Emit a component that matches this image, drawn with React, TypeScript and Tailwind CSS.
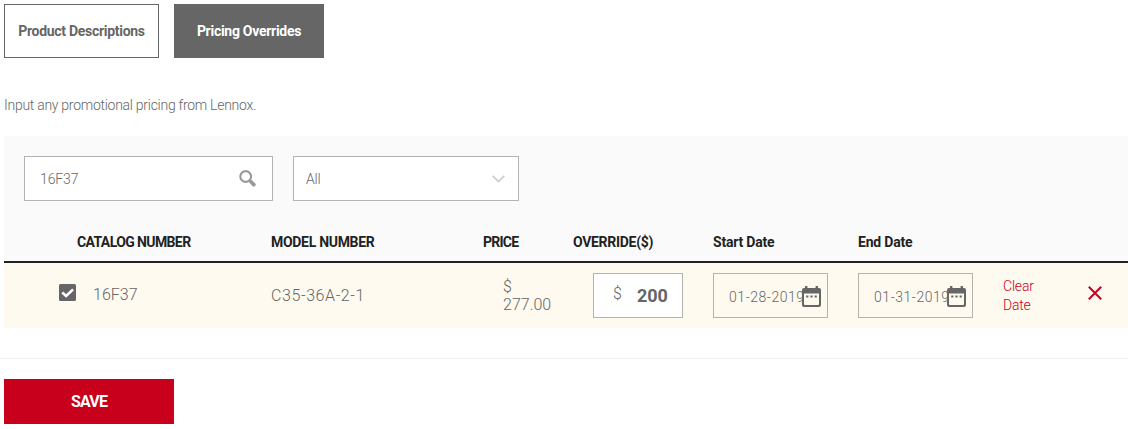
import React, { useState } from 'react';

const columns = 'grid grid-cols-[267px_212px_90px_140px_145px_145px_85px_1fr]';

const SearchIcon = () => (
  <svg className="h-[17px] w-[17px]" viewBox="0 0 17 17" fill="none" stroke="#999999">
    <circle cx="6.7" cy="6.5" r="5.4" strokeWidth="2.1" />
    <path d="M10.6 10.4l1.5 1.5" strokeWidth="2.4" />
    <path d="M12.2 12l2.6 2.6" strokeWidth="3.8" strokeLinecap="round" />
  </svg>
);

const CalendarIcon = () => (
  <svg className="h-[21px] w-[19px]" viewBox="0 0 19 21">
    <path
      fill="#666666"
      fillRule="evenodd"
      d="M3 0h2.4v2h8.2V0H16v2h1a2 2 0 0 1 2 2v15a2 2 0 0 1-2 2H2a2 2 0 0 1-2-2V4a2 2 0 0 1 2-2h1zM2 7.6V18a1 1 0 0 0 1 1h13a1 1 0 0 0 1-1V7.6z"
    />
    <path fill="#666666" d="M4.2 9.6h2.2v2H4.2zM8.4 9.6h2.2v2H8.4zM12.6 9.6h2.2v2h-2.2z" />
  </svg>
);

const DateField: React.FC<{ value: string }> = ({ value }) => (
  <div className="mt-[10px] flex h-[45px] w-[115px] items-center border border-[#b5b3ac] pl-[15px] pt-px">
    <span className="w-[73px] whitespace-nowrap pt-px text-sm font-light tracking-[0.55px]">{value}</span>
    <span className="mt-px flex-shrink-0">
      <CalendarIcon />
    </span>
  </div>
);

const App: React.FC = () => {
  const [query, setQuery] = useState('16F37');

  return (
    <div className="h-[429px] w-[1128px] overflow-hidden bg-white pt-1 font-['Roboto','Open_Sans',sans-serif] text-[#666666]">
      {/* Tabs */}
      <div className="flex gap-[15px] pl-1 text-sm font-bold">
        <button className="h-[54px] w-[155px] whitespace-nowrap border border-[#666666] tracking-[-0.29px]">
          Product Descriptions
        </button>
        <button className="h-[54px] w-[150px] whitespace-nowrap bg-[#666666] tracking-[-0.28px] text-white">
          Pricing Overrides
        </button>
      </div>

      <p className="mt-[37px] h-[41px] pl-1 text-sm font-light leading-5 tracking-[-0.27px]">
        Input any promotional pricing from Lennox.
      </p>

      <div className="ml-1 bg-[#fafafa]">
        {/* Filters */}
        <div className="flex gap-5 pl-5 pt-5">
          <label className="flex h-[45px] w-[249px] items-center border border-[#b3b3b3] bg-white pl-[15px] pr-4">
            <input
              value={query}
              onChange={(e) => setQuery(e.target.value)}
              className="min-w-0 flex-1 pt-px text-sm font-light tracking-[-0.1px] outline-none"
            />
            <SearchIcon />
          </label>
          <button className="flex h-[45px] w-[226px] items-center justify-between border border-[#b3b3b3] bg-white pl-3 pr-[13px] text-sm font-light tracking-[-0.2px]">
            All
            <svg className="h-2 w-[13px]" viewBox="0 0 13 8" fill="none" stroke="#cccccc" strokeWidth="1.7">
              <path d="M.7.8l5.8 5.8L12.3.8" />
            </svg>
          </button>
        </div>

        {/* Table header */}
        <div className={`${columns} h-[62px] items-center border-b-2 border-[#222222] pt-[21px] text-sm font-bold leading-5 text-[#222222]`}>
          <span className="pl-[73px] tracking-[-0.61px]">CATALOG NUMBER</span>
          <span className="tracking-[-0.3px]">MODEL NUMBER</span>
          <span className="tracking-[-0.75px]">PRICE</span>
          <span className="tracking-[-0.3px]">OVERRIDE($)</span>
          <span className="tracking-[-0.2px]">Start Date</span>
          <span className="tracking-[-0.2px]">End Date</span>
        </div>

        {/* Row */}
        <div className={`${columns} h-[65px] bg-[#fffaef]`}>
          <div className="flex items-start pl-[55px]">
            <svg className="mt-[21px] h-[17px] w-[17px]" viewBox="0 0 17 17">
              <rect width="17" height="17" rx="1.5" fill="#666666" />
              <path d="M3.3 8.5l3.8 3.5 7-6.6" fill="none" stroke="#ffffff" strokeWidth="2.6" />
            </svg>
            <span className="ml-[17px] mt-5 text-base font-light leading-6">16F37</span>
          </div>
          <span className="mt-[21px] text-base font-light leading-6 tracking-[0.6px]">C35-36A-2-1</span>
          <span className="mt-[15px] w-[50px] pl-5 text-base font-light leading-[18px]">
            $<br />277.00
          </span>
          <div className="ml-5 mt-[10px] flex h-[45px] w-[90px] items-center border border-[#b5b3ac] bg-white pl-[19px]">
            <span className="-mt-1 w-6 text-base font-light">$</span>
            <span className="pt-px text-lg font-bold tracking-[-0.1px]">200</span>
          </div>
          <DateField value="01-28-2019" />
          <DateField value="01-31-2019" />
          <a className="mt-[14px] w-10 text-sm font-light leading-[19px] tracking-[-0.2px] text-[#c8001f]">Clear Date</a>
          <svg className="mt-[23px] h-[14px] w-[14px]" viewBox="0 0 14 14" stroke="#c8001f" strokeWidth="2">
            <path d="M.8.8l12.4 12.4M13.2.8L.8 13.2" />
          </svg>
        </div>
      </div>

      <div className="mt-[30px] border-t border-[#eeeeee] pl-1 pt-5">
        <button className="h-[45px] w-[170px] bg-[#c8001b] pt-px text-base font-bold tracking-[-0.8px] text-white">SAVE</button>
      </div>
    </div>
  );
};

export default App;
